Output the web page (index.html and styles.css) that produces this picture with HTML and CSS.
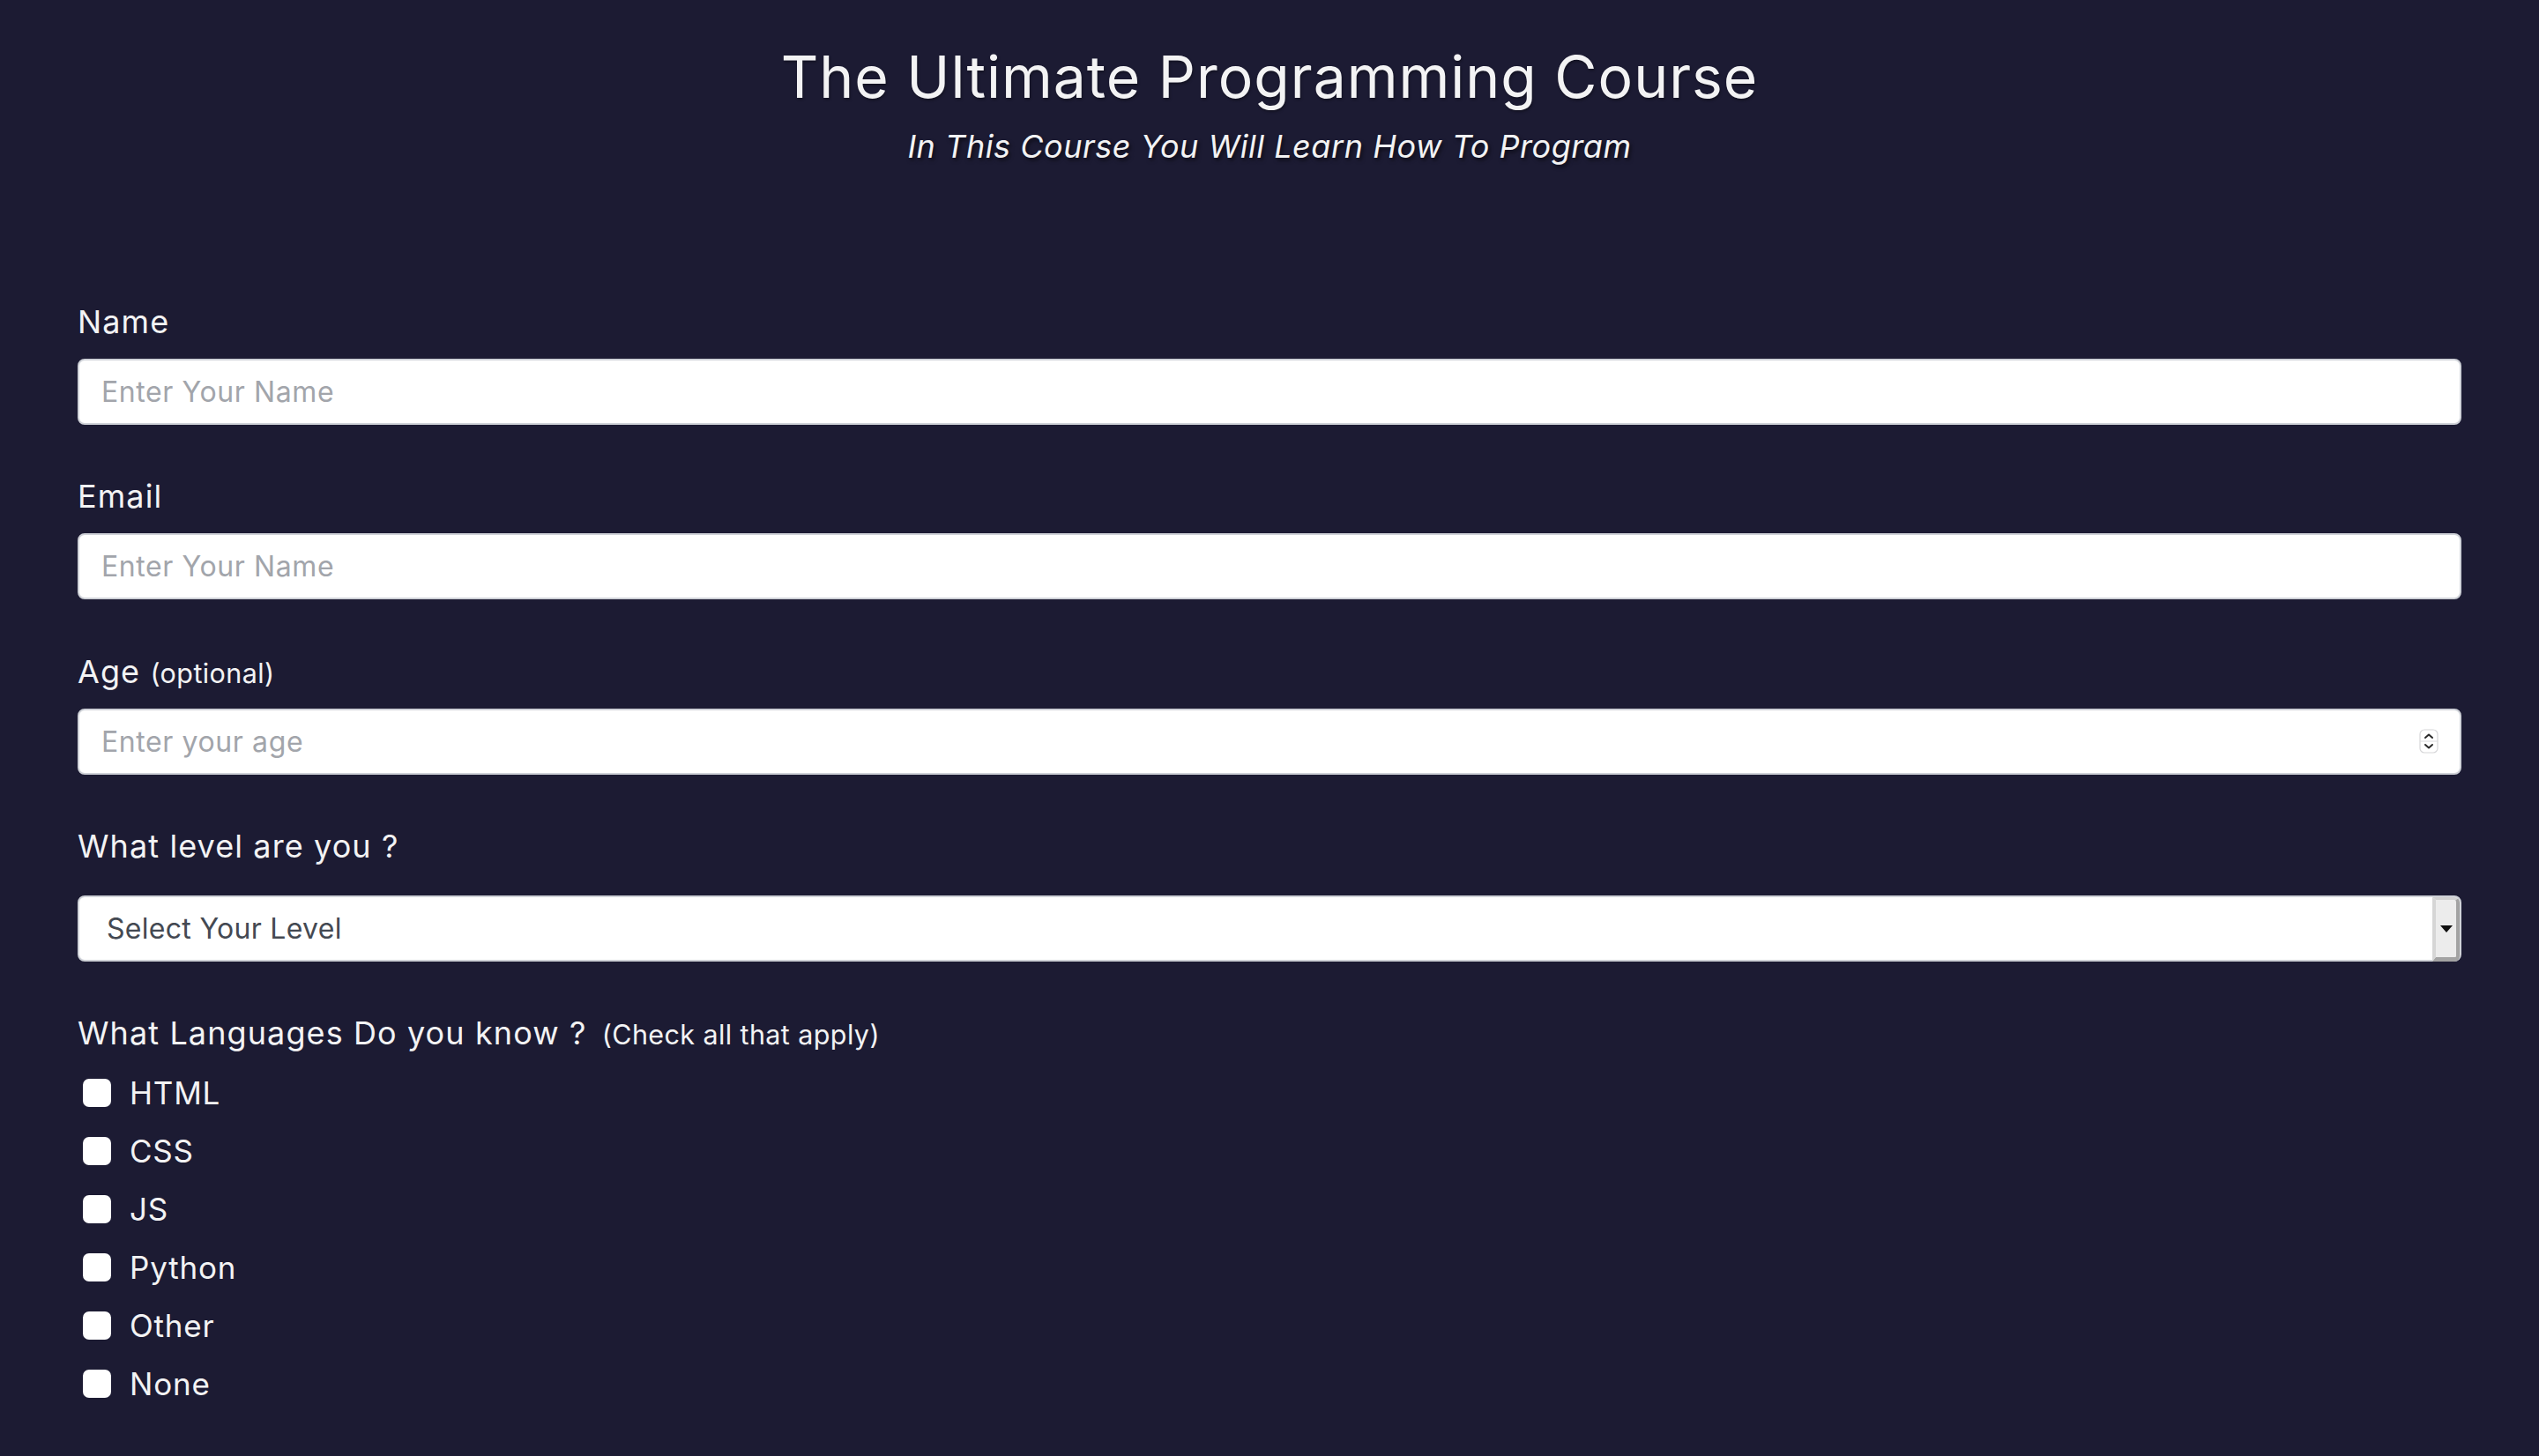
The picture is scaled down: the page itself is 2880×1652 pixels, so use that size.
FILE: index.html
```html
<!DOCTYPE html>
<html lang="en">
<head>
<meta charset="utf-8">
<title>The Ultimate Programming Course</title>
<link rel="stylesheet" href="styles.css">
</head>
<body>
<header class="hero">
  <h1 class="title">The Ultimate Programming Course</h1>
  <p class="subtitle">In This Course You Will Learn How To Program</p>
</header>
<form class="survey">
  <div class="field">
    <label class="field-label" for="name">Name</label>
    <input class="text-input" id="name" type="text" placeholder="Enter Your Name">
  </div>
  <div class="field">
    <label class="field-label" for="email">Email</label>
    <input class="text-input" id="email" type="email" placeholder="Enter Your Name">
  </div>
  <div class="field">
    <label class="field-label" for="age">Age <span class="hint">(optional)</span></label>
    <div class="input-wrap">
      <input class="text-input number-input" id="age" type="number" placeholder="Enter your age">
      <span class="spinner" aria-hidden="true">
        <svg width="22" height="28" viewBox="0 0 22 28">
          <rect x="1" y="1" width="20" height="26" rx="5" fill="#fff" stroke="#d6d6d8" stroke-width="1.2"/>
          <line x1="1" y1="14" x2="21" y2="14" stroke="#dcdcde" stroke-width="1"/>
          <polyline points="7,10 11,6.5 15,10" fill="none" stroke="#2a2a2a" stroke-width="2" stroke-linecap="round" stroke-linejoin="round"/>
          <polyline points="7,18 11,21.5 15,18" fill="none" stroke="#2a2a2a" stroke-width="2" stroke-linecap="round" stroke-linejoin="round"/>
        </svg>
      </span>
    </div>
  </div>
  <div class="field field-select">
    <label class="field-label" for="level">What level are you ?</label>
    <div class="input-wrap">
      <select class="select-input" id="level">
        <option>Select Your Level</option>
        <option>Beginner</option>
        <option>Intermediate</option>
        <option>Advanced</option>
      </select>
      <span class="select-button" aria-hidden="true">
        <svg width="16" height="10" viewBox="0 0 16 10"><polygon points="1,1 15,1 8,9" fill="#111"/></svg>
      </span>
    </div>
  </div>
  <div class="field field-checks">
    <p class="field-label">What Languages Do you know ? <span class="hint hint-wide">(Check all that apply)</span></p>
    <div class="checks">
      <label class="check"><input class="check-box" type="checkbox"><span>HTML</span></label>
      <label class="check"><input class="check-box" type="checkbox"><span>CSS</span></label>
      <label class="check"><input class="check-box" type="checkbox"><span>JS</span></label>
      <label class="check"><input class="check-box" type="checkbox"><span>Python</span></label>
      <label class="check"><input class="check-box" type="checkbox"><span>Other</span></label>
      <label class="check"><input class="check-box" type="checkbox"><span>None</span></label>
    </div>
  </div>
</form>
</body>
</html>
```

FILE: styles.css
```css
* {
  box-sizing: border-box;
}

html, body {
  margin: 0;
  padding: 0;
}

body {
  background: #1c1b33;
  color: #f3f3f4;
  font-family: Inter, "Open Sans", "Liberation Sans", sans-serif;
  min-height: 1652px;
}

.hero {
  padding-top: 47px;
  text-align: center;
}

.title {
  margin: 0;
  font-size: 66px;
  font-weight: 400;
  line-height: 80px;
  letter-spacing: 1px;
  text-shadow: 1px 2px 3px rgba(0, 0, 0, 0.35);
}

.subtitle {
  margin: 17px 0 0;
  font-size: 36px;
  font-style: italic;
  line-height: 44px;
  letter-spacing: 0.55px;
  text-shadow: 2px 3px 4px rgba(0, 0, 0, 0.55);
}

.survey {
  display: flex;
  flex-direction: column;
  gap: 59.4px;
  padding: 155px 88px 0;
}

.field {
  display: flex;
  flex-direction: column;
  gap: 20px;
}

.field-select {
  gap: 34px;
}

.field-checks {
  gap: 13px;
  margin-top: -1px;
}

.field-label {
  margin: 0;
  font-size: 36px;
  line-height: 44px;
  font-weight: 400;
  letter-spacing: 1.1px;
}

.hint {
  font-size: 30.5px;
  line-height: 1;
  letter-spacing: 0.4px;
}

.hint-wide {
  margin-left: 6px;
}

.input-wrap {
  position: relative;
}

.text-input,
.select-input {
  display: block;
  width: 100%;
  height: 75px;
  margin: 0;
  background: #ffffff;
  border: 2px solid #cfd2d8;
  border-radius: 8px;
  font-family: Inter, "Open Sans", "Liberation Sans", sans-serif;
  font-size: 32px;
  color: #2d3138;
  outline: none;
}

.text-input {
  padding: 0 25px;
}

.text-input::placeholder {
  color: #a2a5ab;
  letter-spacing: 0.6px;
}

.number-input {
  appearance: textfield;
  -moz-appearance: textfield;
}

.number-input::-webkit-inner-spin-button,
.number-input::-webkit-outer-spin-button {
  -webkit-appearance: none;
  margin: 0;
}

.spinner {
  position: absolute;
  right: 26px;
  top: 23px;
  width: 22px;
  height: 28px;
  display: flex;
}

.select-input {
  appearance: none;
  -webkit-appearance: none;
  padding: 0 31px;
  color: #444952;
  letter-spacing: 0.3px;
}

.select-button {
  position: absolute;
  top: 2px;
  right: 2px;
  bottom: 0;
  width: 31px;
  background: #ececec;
  border-style: solid;
  border-width: 3px 4px 5px 4px;
  border-color: #d2d2d2 #a3a3a3 #a3a3a3 #d6d6d6;
  border-top-right-radius: 6px;
  border-bottom-right-radius: 6px;
  display: flex;
  align-items: center;
  justify-content: center;
}

.checks {
  display: flex;
  flex-direction: column;
  padding-left: 6px;
}

.check {
  display: flex;
  align-items: center;
  gap: 21px;
  height: 66px;
  font-size: 35px;
  letter-spacing: 0.8px;
}

.check-box {
  appearance: none;
  -webkit-appearance: none;
  width: 32px;
  height: 32px;
  margin: 0;
  background: #ffffff;
  border-radius: 7px;
  border: none;
  flex: none;
}
```
